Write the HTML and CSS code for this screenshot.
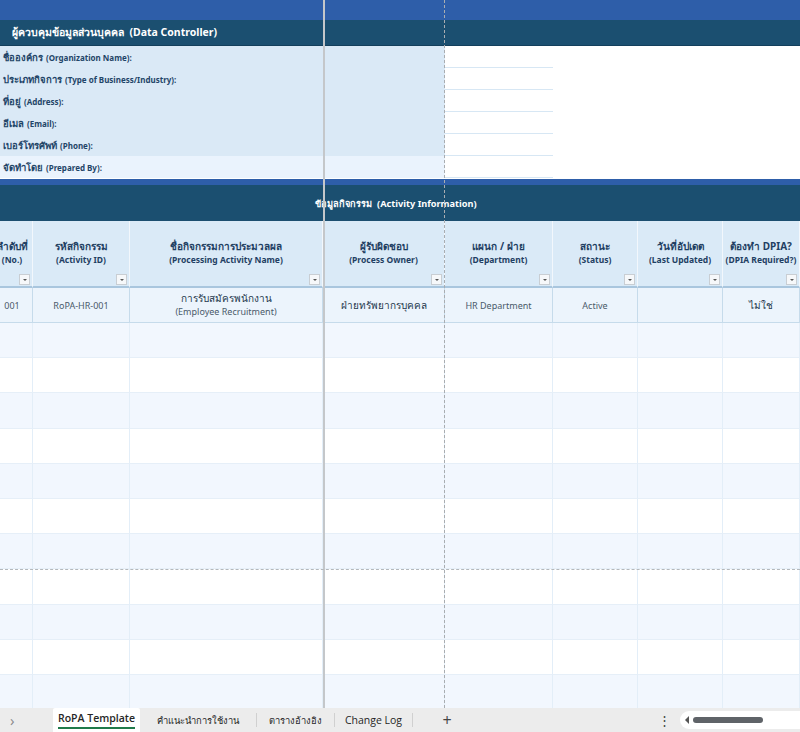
FILE: index.html
```html
<!DOCTYPE html>
<html lang="th">
<head>
<meta charset="utf-8">
<title>RoPA Template</title>
<link rel="stylesheet" href="styles.css">
</head>
<body>
<div class="app">
  <div class="sheet">
    <div class="band-top"></div>
    <div class="title-bar"><span>ผู้ควบคุมข้อมูลส่วนบุคคล&nbsp; (Data Controller)</span></div>
    <div class="ctrl">
      <div class="ctrl-label">ชื่อองค์กร <small>(Organization Name):</small></div><div class="ctrl-input"></div><div class="ctrl-rest"></div>
      <div class="ctrl-label">ประเภทกิจการ <small>(Type of Business/Industry):</small></div><div class="ctrl-input"></div><div class="ctrl-rest"></div>
      <div class="ctrl-label">ที่อยู่ <small>(Address):</small></div><div class="ctrl-input"></div><div class="ctrl-rest"></div>
      <div class="ctrl-label">อีเมล <small>(Email):</small></div><div class="ctrl-input"></div><div class="ctrl-rest"></div>
      <div class="ctrl-label">เบอร์โทรศัพท์ <small>(Phone):</small></div><div class="ctrl-input"></div><div class="ctrl-rest"></div>
      <div class="ctrl-label last">จัดทำโดย <small>(Prepared By):</small></div><div class="ctrl-input"></div><div class="ctrl-rest"></div>
    </div>
    <div class="band-mid"></div>
    <div class="section-bar">ข้อมูลกิจกรรม&nbsp; (Activity Information)</div>
    <div class="grid">
      <div class="th"><b>ลำดับที่</b><i>(No.)</i><span class="flt"></span></div>
      <div class="th"><b>รหัสกิจกรรม</b><i>(Activity ID)</i><span class="flt"></span></div>
      <div class="th"><b>ชื่อกิจกรรมการประมวลผล</b><i>(Processing Activity Name)</i><span class="flt"></span></div>
      <div class="th"><b>ผู้รับผิดชอบ</b><i>(Process Owner)</i><span class="flt"></span></div>
      <div class="th"><b>แผนก / ฝ่าย</b><i>(Department)</i><span class="flt"></span></div>
      <div class="th"><b>สถานะ</b><i>(Status)</i><span class="flt"></span></div>
      <div class="th"><b>วันที่อัปเดต</b><i>(Last Updated)</i><span class="flt"></span></div>
      <div class="th"><b>ต้องทำ DPIA?</b><i>(DPIA Required?)</i><span class="flt"></span></div>

      <div class="td first">001</div>
      <div class="td first">RoPA-HR-001</div>
      <div class="td first two"><span class="th-txt">การรับสมัครพนักงาน</span><span>(Employee Recruitment)</span></div>
      <div class="td first dark">ฝ่ายทรัพยากรบุคคล</div>
      <div class="td first">HR Department</div>
      <div class="td first">Active</div>
      <div class="td first"></div>
      <div class="td first dark">ไม่ใช่</div>
    </div>
    <div class="rows">
      <div class="row alt"><i></i><i></i><i></i><i></i><i></i><i></i><i></i><i></i></div>
      <div class="row"><i></i><i></i><i></i><i></i><i></i><i></i><i></i><i></i></div>
      <div class="row alt"><i></i><i></i><i></i><i></i><i></i><i></i><i></i><i></i></div>
      <div class="row"><i></i><i></i><i></i><i></i><i></i><i></i><i></i><i></i></div>
      <div class="row alt"><i></i><i></i><i></i><i></i><i></i><i></i><i></i><i></i></div>
      <div class="row"><i></i><i></i><i></i><i></i><i></i><i></i><i></i><i></i></div>
      <div class="row alt"><i></i><i></i><i></i><i></i><i></i><i></i><i></i><i></i></div>
      <div class="row"><i></i><i></i><i></i><i></i><i></i><i></i><i></i><i></i></div>
      <div class="row alt"><i></i><i></i><i></i><i></i><i></i><i></i><i></i><i></i></div>
      <div class="row"><i></i><i></i><i></i><i></i><i></i><i></i><i></i><i></i></div>
      <div class="row alt"><i></i><i></i><i></i><i></i><i></i><i></i><i></i><i></i></div>
    </div>
    <div class="freeze"></div>
    <div class="vbreak"></div>
    <div class="hbreak"></div>
  </div>
  <div class="tabs">
    <span class="chev">&#x203A;</span>
    <span class="tab active"><span>RoPA Template</span></span>
    <span class="tab th-tab w2">คำแนะนำการใช้งาน</span>
    <span class="sep"></span>
    <span class="tab th-tab w3">ตารางอ้างอิง</span>
    <span class="sep"></span>
    <span class="tab w3">Change Log</span>
    <span class="sep"></span>
    <span class="plus">+</span>
    <span class="spacer"></span>
    <span class="dots">&#x22EE;</span>
    <span class="scroll"><span class="tri"></span><span class="thumb"></span></span>
  </div>
</div>
</body>
</html>
```

FILE: styles.css
```css
* { box-sizing: border-box; }
html, body { margin: 0; padding: 0; }
body {
  width: 800px; height: 732px; overflow: hidden;
  font-family: "Noto Sans", "Open Sans", "Liberation Sans", sans-serif;
  background: #fff;
}
.app { display: flex; flex-direction: column; height: 732px; }
.sheet { position: relative; height: 708px; overflow: hidden; }

.band-top { height: 20px; background: #2e5ea9; }
.title-bar {
  height: 26px; background: #1b4f70; border-bottom: 1px solid #133f5c;
  color: #fff; font-weight: 700; font-size: 10.5px;
  display: flex; align-items: center; padding-left: 12px;
}

.ctrl { display: grid; grid-template-columns: 445px 108px 1fr; grid-auto-rows: 22px; }
.ctrl-label {
  background: #dae9f6; color: #1f4568; font-weight: 700; font-size: 9.5px;
  display: flex; align-items: center; padding-left: 3px; white-space: nowrap;
}
.ctrl-label small { font-size: 8px; margin-left: 3px; }
.ctrl-label.last { background: #eaf3fd; }
.ctrl-input { border-bottom: 1px solid #d7e7f4; }
.ctrl-rest { background: #fff; }

.band-mid { height: 7px; background: #2e5ea9; border-top: 1px solid #fff; }
.section-bar {
  height: 36px; background: #1b4f70; color: #fff; font-weight: 700; font-size: 9.2px;
  display: flex; align-items: center; justify-content: center; margin-left: -8px;
}

.grid {
  display: grid; margin-left: -8px;
  grid-template-columns: 41px 97px 193px 122px 108px 85px 85px 77px;
  grid-template-rows: 67px 35px;
}
.th {
  position: relative; background: #daeaf7;
  border-right: 1px solid #f2f7fc; border-bottom: 2px solid #a9c6de;
  display: flex; flex-direction: column; align-items: center; justify-content: center;
  color: #1f3f63; padding-bottom: 2px; line-height: 13px;
}
.th b { font-size: 10px; font-weight: 700; }
.th i { font-style: normal; font-size: 8.5px; font-weight: 700; }
.flt {
  position: absolute; right: 2px; bottom: 1px; width: 11px; height: 11px;
  background: #f6f8fa; border: 1px solid #c9ced3;
}
.flt::after {
  content: ""; position: absolute; left: 3px; top: 4px;
  border-left: 2px solid transparent; border-right: 2px solid transparent; border-top: 2px solid #555;
}
.td {
  background: #ecf4fc; border-right: 1px solid #c6dbeb; border-bottom: 1px solid #c6dbeb;
  display: flex; align-items: center; justify-content: center;
  font-size: 9px; color: #4a5a6a; white-space: nowrap;
}
.td.two { flex-direction: column; line-height: 13px; }
.td.two .th-txt { color: #24384d; font-size: 10px; }
.td.dark { color: #24384d; font-size: 10px; font-weight: 500; }

.rows { margin-left: -8px; }
.row {
  display: grid; grid-template-columns: 41px 97px 193px 122px 108px 85px 85px 77px;
  height: 35.2px; background: #fff;
}
.row.alt { background: #f2f7fe; }
.row i { border-right: 1px solid #e3eef8; border-bottom: 1px solid #e6eff8; }

.freeze { position: absolute; left: 323px; top: 0; bottom: 0; width: 2px; background: #c4c7ca; }
.vbreak { position: absolute; left: 444px; top: 0; bottom: 0; width: 0; border-left: 1.5px dashed #a9adb1; }
.hbreak { position: absolute; left: 0; right: 0; top: 569px; height: 0; border-top: 1.5px dashed #b4b8bc; }

.tabs {
  height: 24px; background: #ececec; display: flex; align-items: center;
  font-family: "Open Sans", "Noto Sans", sans-serif; font-size: 10.5px; color: #262626;
}
.chev { width: 53px; padding-left: 10px; color: #888; font-size: 15px; }
.tab { white-space: nowrap; text-align: center; }
.th-tab { font-size: 9.4px; }
.w2 { width: 116px; }
.w3 { width: 77px; }
.tab.active {
  background: #fff; width: 87px; height: 24px; display: flex; align-items: center; justify-content: center;
  font-weight: 600; border-radius: 2px 2px 0 0;
}
.tab.active span { border-bottom: 2px solid #1f7a4a; line-height: 15px; padding-bottom: 1px; }
.sep { width: 1px; height: 14px; background: #d0d0d0; }
.plus { width: 68px; text-align: center; font-size: 16px; color: #444; }
.spacer { flex: 1; }
.dots { color: #444; font-size: 13px; margin-right: 9px; }
.scroll {
  width: 120px; height: 18px; background: #fff; border-radius: 9px 0 0 9px;
  display: flex; align-items: center; padding-left: 5px;
}
.tri { width: 0; height: 0; border-top: 4px solid transparent; border-bottom: 4px solid transparent; border-right: 4px solid #555; margin-right: 4px; }
.thumb { width: 70px; height: 6px; border-radius: 3px; background: #5f6368; }
```
